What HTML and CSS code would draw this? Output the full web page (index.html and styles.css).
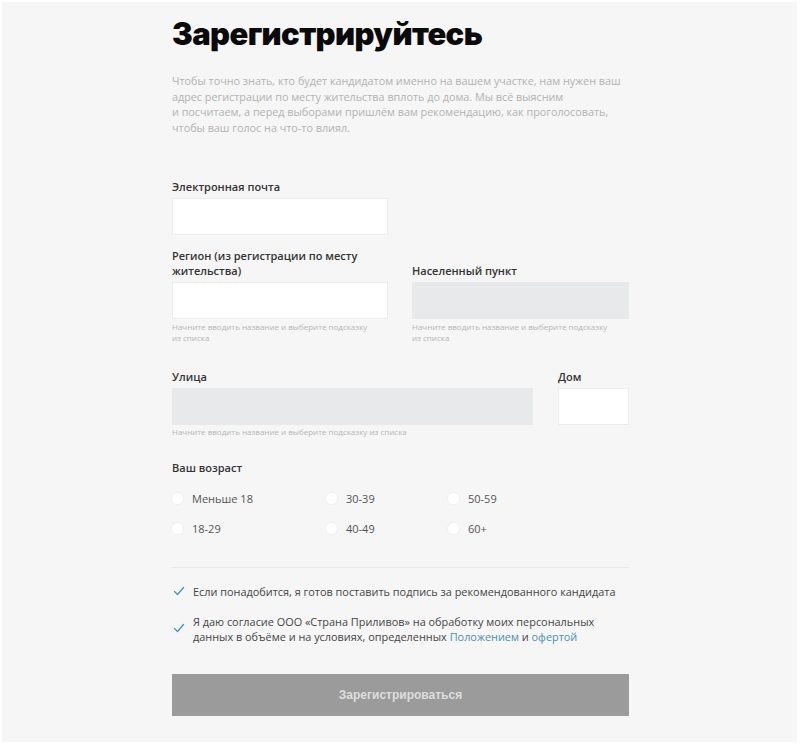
FILE: index.html
```html
<!DOCTYPE html>
<html lang="ru">
<head>
<meta charset="utf-8">
<title>Зарегистрируйтесь</title>
<link rel="stylesheet" href="styles.css">
</head>
<body>
<div class="page">
  <main class="form">
    <h1 class="title">Зарегистрируйтесь</h1>
    <p class="intro">Чтобы точно знать, кто будет кандидатом именно на вашем участке, нам нужен ваш<br>адрес регистрации по месту жительства вплоть до дома. Мы всё выясним<br>и посчитаем, а перед выборами пришлём вам рекомендацию, как проголосовать,<br>чтобы ваш голос на что-то влиял.</p>

    <div class="field email">
      <label class="label">Электронная почта</label>
      <div class="input"></div>
    </div>

    <div class="row pair">
      <div class="field">
        <label class="label">Регион (из регистрации по месту<br>жительства)</label>
        <div class="input"></div>
        <div class="hint">Начните вводить название и выберите подсказку<br>из списка</div>
      </div>
      <div class="field">
        <label class="label">Населенный пункт</label>
        <div class="input disabled"></div>
        <div class="hint">Начните вводить название и выберите подсказку<br>из списка</div>
      </div>
    </div>

    <div class="row street">
      <div class="field">
        <label class="label">Улица</label>
        <div class="input disabled"></div>
        <div class="hint">Начните вводить название и выберите подсказку из списка</div>
      </div>
      <div class="field">
        <label class="label">Дом</label>
        <div class="input"></div>
      </div>
    </div>

    <div class="age">
      <div class="label">Ваш возраст</div>
      <div class="radios">
        <div class="radio"><span class="dot"></span>Меньше 18</div>
        <div class="radio"><span class="dot"></span>30-39</div>
        <div class="radio"><span class="dot"></span>50-59</div>
        <div class="radio"><span class="dot"></span>18-29</div>
        <div class="radio"><span class="dot"></span>40-49</div>
        <div class="radio"><span class="dot"></span>60+</div>
      </div>
    </div>

    <div class="divider"></div>

    <div class="check one">
      <svg class="tick" viewBox="0 0 12 10" width="12" height="10"><path d="M1.5 5.5 L4.5 8.5 L10.5 1.5" fill="none" stroke="#4f97b5" stroke-width="1.4" stroke-linecap="round" stroke-linejoin="round"/></svg>
      <span>Если понадобится, я готов поставить подпись за рекомендованного кандидата</span>
    </div>
    <div class="check two">
      <svg class="tick" viewBox="0 0 12 10" width="12" height="10"><path d="M1.5 5.5 L4.5 8.5 L10.5 1.5" fill="none" stroke="#4f97b5" stroke-width="1.4" stroke-linecap="round" stroke-linejoin="round"/></svg>
      <span>Я даю согласие ООО «Страна Приливов» на обработку моих персональных<br>данных в объёме и на условиях, определенных <a class="link" href="#">Положением</a> и <a class="link" href="#">офертой</a></span>
    </div>

    <button class="submit" type="button">Зарегистрироваться</button>
  </main>
</div>
</body>
</html>
```

FILE: styles.css
```css
html, body {
  margin: 0;
  padding: 0;
  background: #ffffff;
}

.page {
  margin: 2px 3px 3px 2px;
  height: 740px;
  background: #f6f6f6;
  font-family: "Open Sans", "Noto Sans", sans-serif;
  color: #333;
  overflow: hidden;
}

.form {
  width: 457px;
  margin-left: 170px;
  padding-top: 14px;
  display: flex;
  flex-direction: column;
}

.title {
  margin: 0;
  font-family: "Inter", "Liberation Sans", sans-serif;
  font-weight: 900;
  font-size: 31px;
  line-height: 36px;
  letter-spacing: -0.6px;
  color: #0a0a0a;
}

.intro {
  margin: 21px 0 0;
  font-size: 10.8px;
  line-height: 15.6px;
  color: #b2b2b2;
}

.field {
  display: flex;
  flex-direction: column;
}

.label {
  font-size: 11px;
  font-weight: 600;
  line-height: 15px;
  color: #333;
  margin-bottom: 4px;
}

.input {
  height: 37px;
  background: #ffffff;
  box-shadow: 0 0 0 1px #ececec inset;
}

.input.disabled {
  background: #e8e9ea;
  box-shadow: none;
}

.hint {
  margin-top: 1.5px;
  font-size: 8px;
  line-height: 11px;
  color: #b5b5b5;
}

.email {
  margin-top: 44px;
  width: 216px;
}

.row {
  display: grid;
  align-items: end;
}

.pair {
  margin-top: 13px;
  grid-template-columns: 216px 217px;
  column-gap: 24px;
}

.street {
  margin-top: 26px;
  grid-template-columns: 361px 71px;
  column-gap: 25px;
  align-items: start;
}

.age {
  margin-top: 23px;
}

.age .label {
  margin-bottom: 0;
}

.radios {
  margin-top: 13px;
  display: grid;
  grid-template-columns: 154px 122px 1fr;
  row-gap: 10px;
}

.radio {
  display: flex;
  align-items: center;
  gap: 9px;
  height: 20px;
  font-size: 11px;
  color: #555;
}

.dot {
  width: 11px;
  height: 11px;
  border-radius: 50%;
  background: #ffffff;
  box-shadow: 0 0 0 1px #f0f0f0;
}

.divider {
  margin-top: 29px;
  height: 1px;
  background: #e9e9e9;
}

.check {
  display: flex;
  align-items: flex-start;
  gap: 8px;
  font-size: 10.9px;
  line-height: 15px;
  color: #444;
}

.check .tick {
  flex: none;
  margin-left: 1px;
}

.check.one {
  margin-top: 16px;
}

.check.one .tick {
  margin-top: 2px;
}

.check.two {
  margin-top: 15px;
}

.check.two .tick {
  margin-top: 9px;
}

.link {
  color: #4a90ad;
  text-decoration: none;
}

.submit {
  margin-top: 30px;
  height: 42px;
  border: none;
  background: #9b9b9b;
  color: #dedede;
  font-family: "Liberation Sans", Arial, sans-serif;
  font-weight: 700;
  font-size: 12px;
  padding: 0;
  width: 457px;
}
```
